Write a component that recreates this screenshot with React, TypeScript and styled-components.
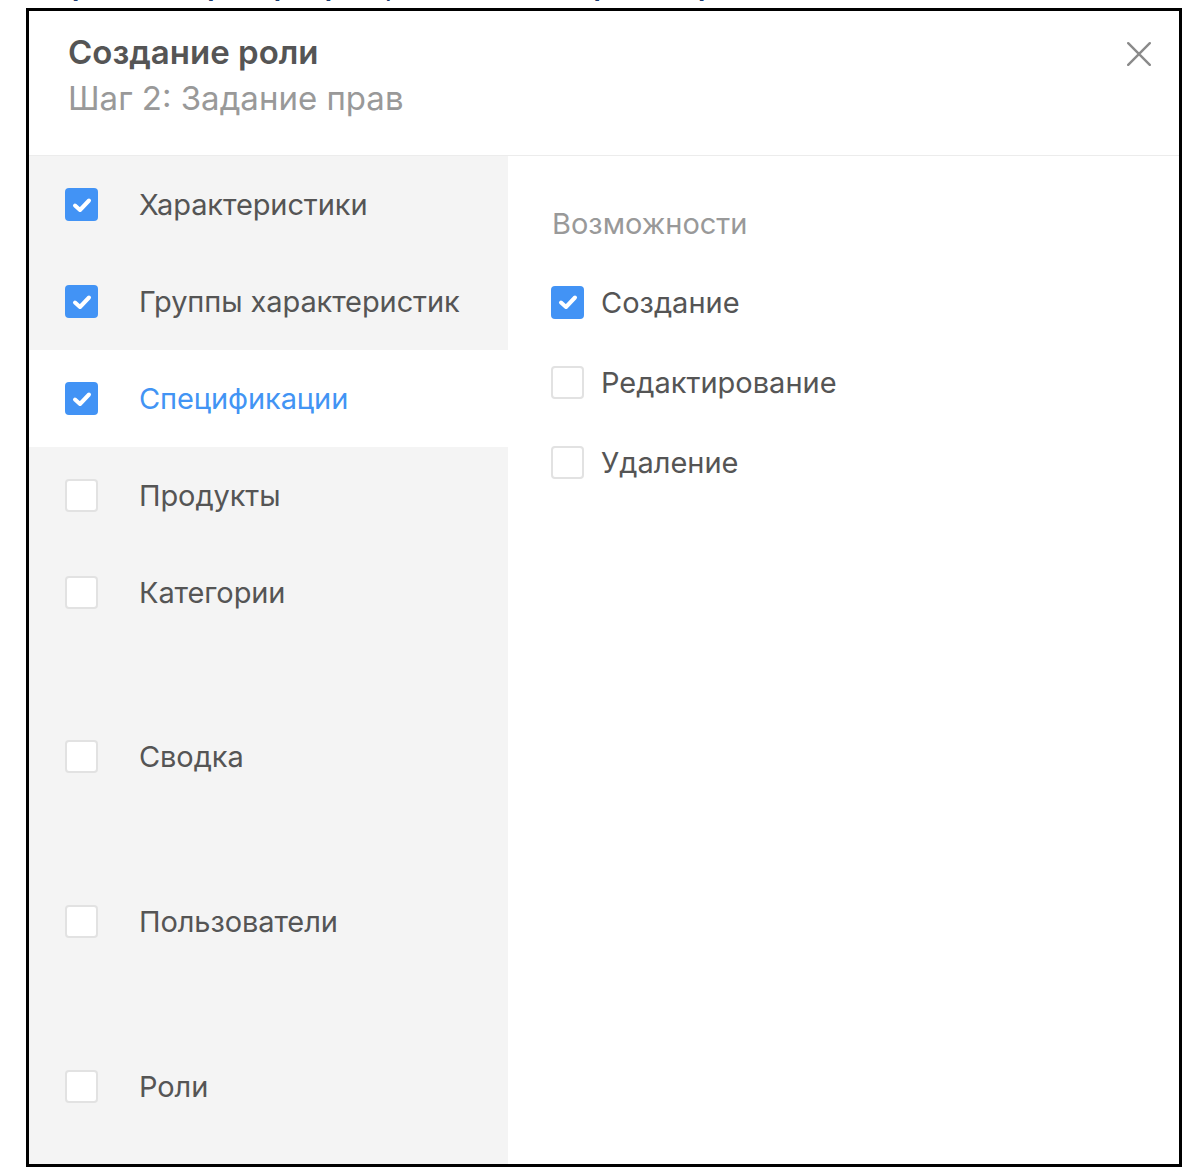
import React from "react";
import styled, { createGlobalStyle } from "styled-components";

const Global = createGlobalStyle`
  html, body { margin: 0; padding: 0; background: #ffffff; }
  body { font-family: Inter, "Liberation Sans", Arial, sans-serif; }
`;

const Page = styled.div`
  width: 1196px;
  height: 1176px;
  overflow: hidden;
  background: #fff;
`;

const CaptionClip = styled.div`
  height: 8px;
  overflow: hidden;
  padding-left: 30px;
`;

const Caption = styled.div`
  margin-top: -28px;
  font-size: 25px;
  line-height: 30px;
  font-weight: 700;
  color: #1b3a6e;
  white-space: nowrap;
`;

const Frame = styled.div`
  margin-left: 26px;
  width: 1156px;
  height: 1159px;
  box-sizing: border-box;
  border: 3px solid #000;
  display: flex;
  flex-direction: column;
  overflow: hidden;
`;

const Header = styled.div`
  height: 145px;
  box-sizing: border-box;
  border-bottom: 1px solid #ececec;
  padding: 19px 28px 0 39px;
  display: flex;
  justify-content: space-between;
  align-items: flex-start;
`;

const Titles = styled.div`
  display: flex;
  flex-direction: column;
`;

const Title = styled.div`
  font-size: 33px;
  line-height: 44px;
  font-weight: 600;
  color: #555;
`;

const Subtitle = styled.div`
  margin-top: 2px;
  font-size: 33px;
  line-height: 44px;
  color: #999;
`;

const CloseButton = styled.button`
  margin-top: 12px;
  width: 24px;
  height: 24px;
  padding: 0;
  border: none;
  background: transparent;
  display: flex;
  align-items: center;
  justify-content: center;
  cursor: pointer;
`;

const Body = styled.div`
  flex: 1;
  display: flex;
  min-height: 0;
`;

const Sidebar = styled.div`
  width: 479px;
  background: #f4f4f4;
  display: flex;
  flex-direction: column;
`;

const Group = styled.div<{ $first?: boolean }>`
  padding: ${(p) => (p.$first ? "0 0 33px" : "34px 0")};
`;

const Divider = styled.div`
  height: 1px;
  background: #e6e6e6;
  margin: 0 15px 0 2px;
`;

const NavItem = styled.div<{ $active?: boolean }>`
  height: 97px;
  display: flex;
  align-items: center;
  padding-left: 36px;
  gap: 41px;
  background: ${(p) => (p.$active ? "#ffffff" : "transparent")};
  color: ${(p) => (p.$active ? "#4294f4" : "#555")};
  font-size: 29px;
  letter-spacing: -0.1px;
`;

const Box = styled.span<{ $checked?: boolean }>`
  flex: none;
  width: 33px;
  height: 33px;
  box-sizing: border-box;
  border-radius: 4px;
  border: ${(p) => (p.$checked ? "none" : "2px solid #e2e2e2")};
  background: ${(p) => (p.$checked ? "#4293f5" : "#ffffff")};
  display: flex;
  align-items: center;
  justify-content: center;
`;

const Content = styled.div`
  flex: 1;
  padding: 46px 0 0 43px;
  display: flex;
  flex-direction: column;
`;

const SectionLabel = styled.div`
  font-size: 29px;
  line-height: 44px;
  color: #999;
  margin-left: 1px;
  margin-bottom: 16px;
`;

const Option = styled.div`
  height: 80px;
  display: flex;
  align-items: center;
  gap: 17px;
  font-size: 29px;
  color: #555;
`;

const Check = () => (
  <svg width="22" height="18" viewBox="0 0 22 18" fill="none">
    <path d="M4 9.5 L9 14 L18 4.5" stroke="#fff" strokeWidth="4" strokeLinecap="round" strokeLinejoin="round" />
  </svg>
);

const Checkbox = ({ checked }: { checked?: boolean }) => (
  <Box $checked={checked}>{checked && <Check />}</Box>
);

const navGroups: { label: string; checked?: boolean; active?: boolean }[][] = [
  [
    { label: "Характеристики", checked: true },
    { label: "Группы характеристик", checked: true },
    { label: "Спецификации", checked: true, active: true },
    { label: "Продукты" },
    { label: "Категории" },
  ],
  [{ label: "Сводка" }],
  [{ label: "Пользователи" }],
  [{ label: "Роли" }],
];

const options = [
  { label: "Создание", checked: true },
  { label: "Редактирование" },
  { label: "Удаление" },
];

export default function App() {
  return (
    <Page>
      <Global />
      <CaptionClip>
        <Caption>Устройство (пример экрана, шаги создания роли и прав)</Caption>
      </CaptionClip>
      <Frame>
        <Header>
          <Titles>
            <Title>Создание роли</Title>
            <Subtitle>Шаг 2: Задание прав</Subtitle>
          </Titles>
          <CloseButton aria-label="Закрыть">
            <svg width="24" height="24" viewBox="0 0 24 24">
              <path d="M1.2 1.2 L22.8 22.8 M22.8 1.2 L1.2 22.8" stroke="#8a8a8a" strokeWidth="2.4" strokeLinecap="round" />
            </svg>
          </CloseButton>
        </Header>
        <Body>
          <Sidebar>
            {navGroups.map((group, gi) => (
              <React.Fragment key={gi}>
                {gi > 0 && <Divider />}
                <Group $first={gi === 0}>
                  {group.map((item) => (
                    <NavItem key={item.label} $active={item.active}>
                      <Checkbox checked={item.checked} />
                      <span>{item.label}</span>
                    </NavItem>
                  ))}
                </Group>
              </React.Fragment>
            ))}
          </Sidebar>
          <Content>
            <SectionLabel>Возможности</SectionLabel>
            {options.map((o) => (
              <Option key={o.label}>
                <Checkbox checked={o.checked} />
                <span>{o.label}</span>
              </Option>
            ))}
          </Content>
        </Body>
      </Frame>
    </Page>
  );
}
